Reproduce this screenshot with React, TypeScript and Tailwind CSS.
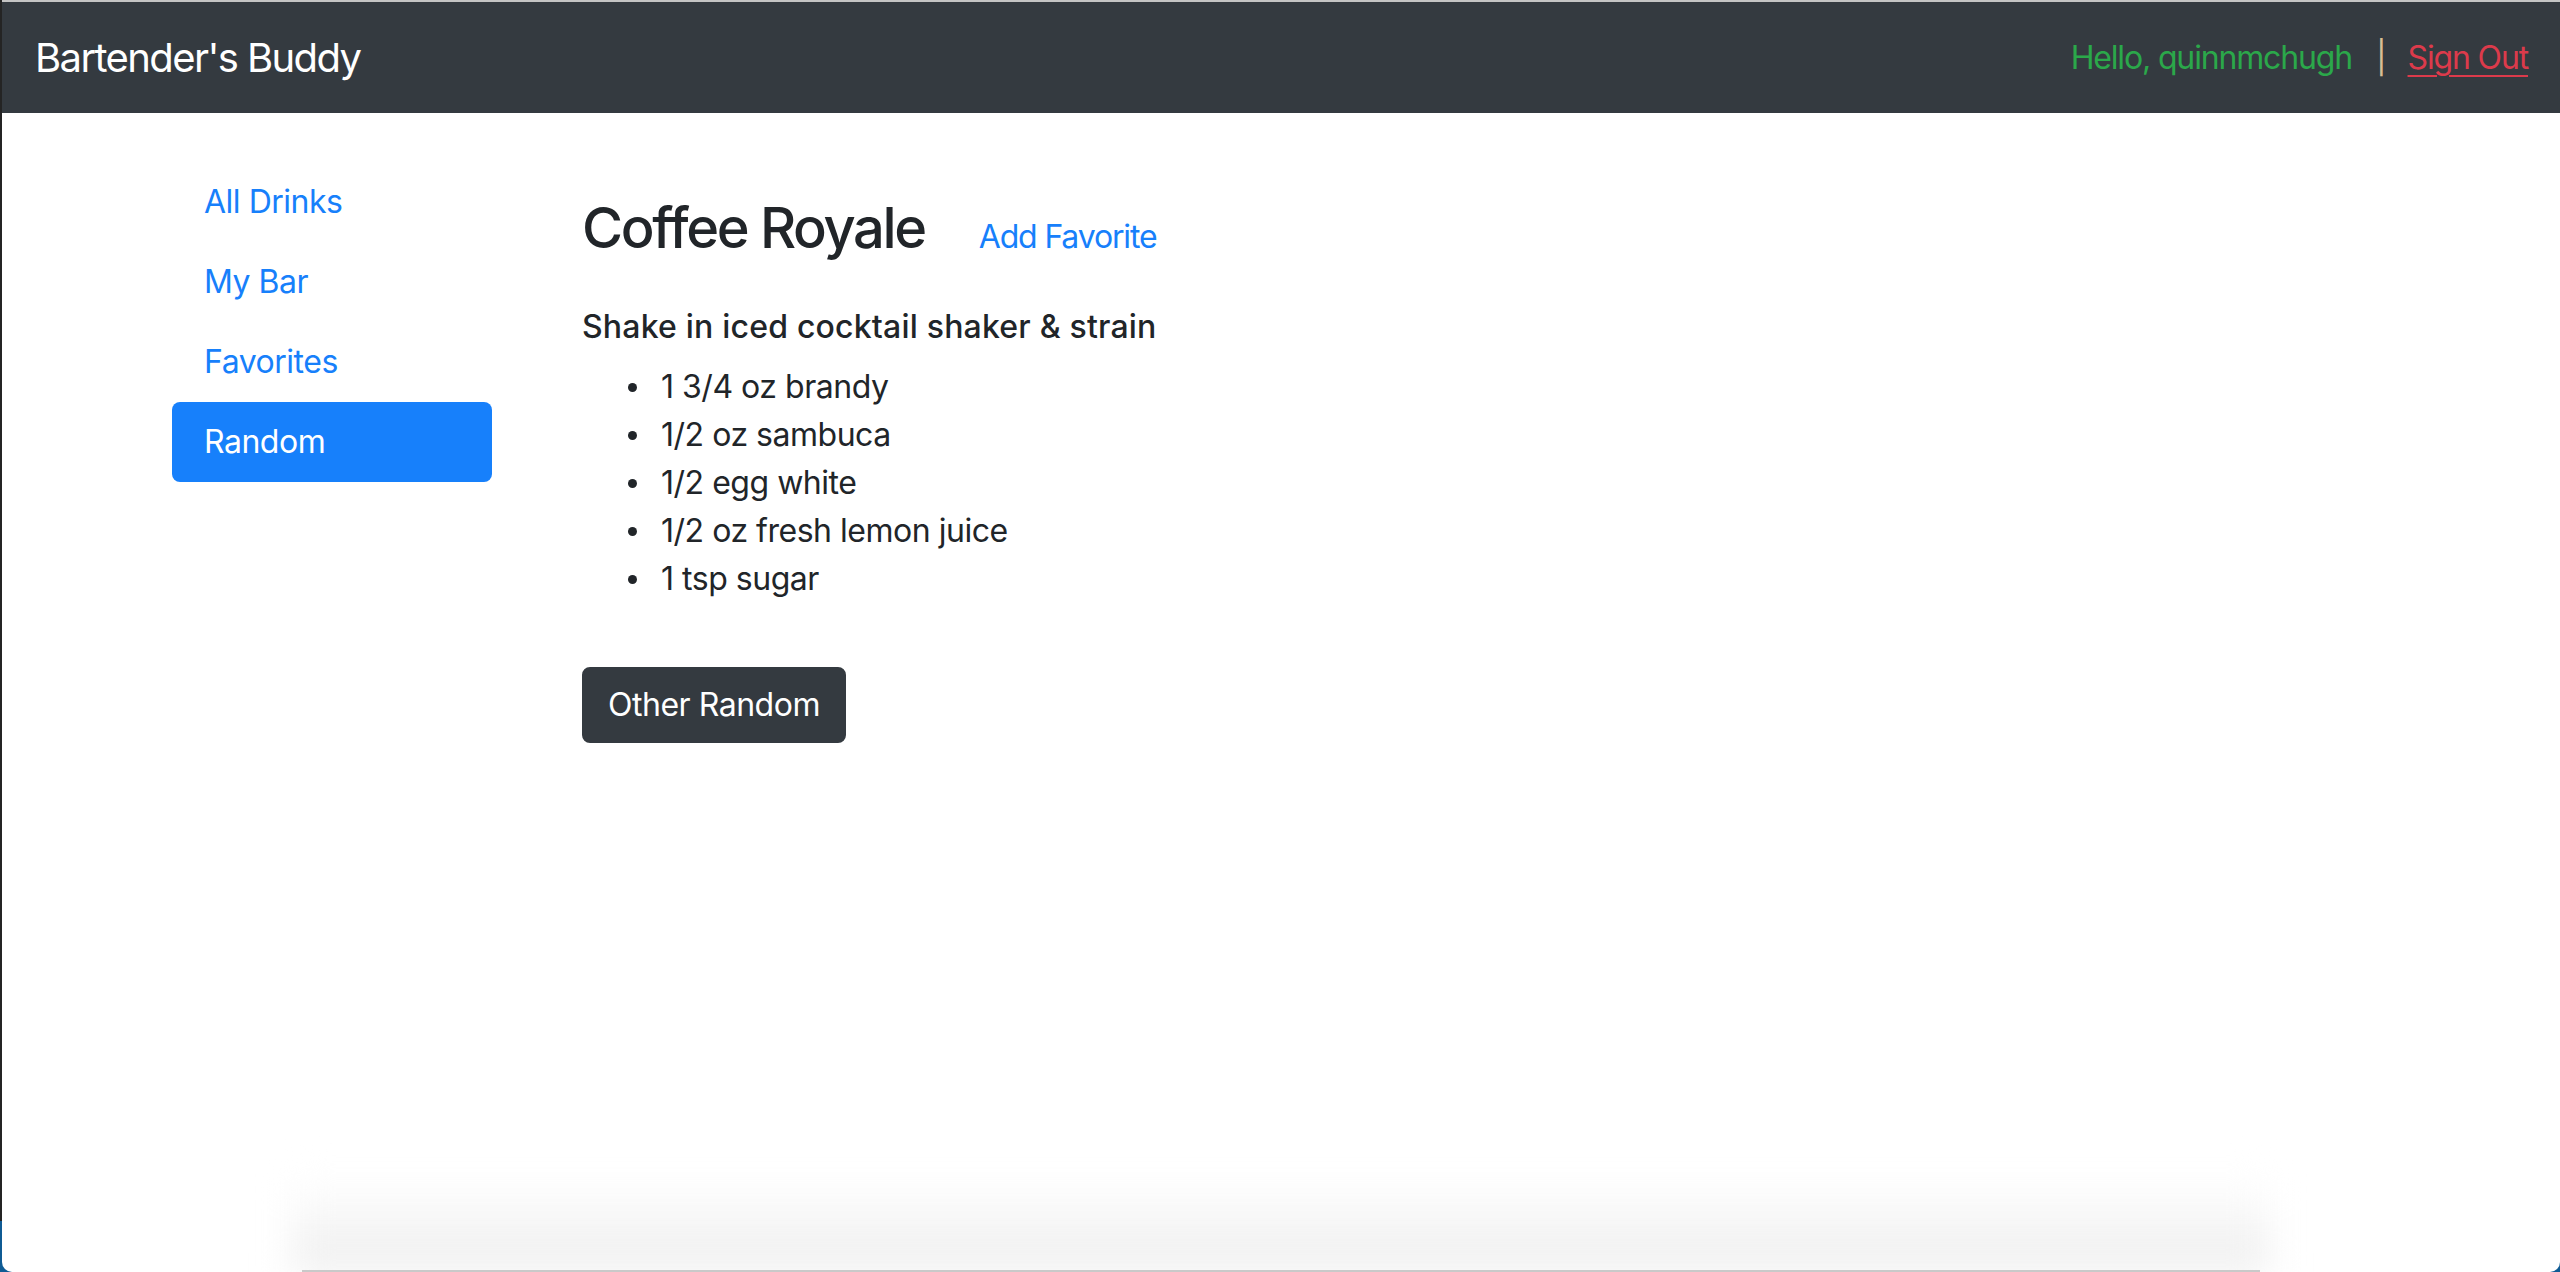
const ingredients = [
  '1 3/4 oz brandy',
  '1/2 oz sambuca',
  '1/2 egg white',
  '1/2 oz fresh lemon juice',
  '1 tsp sugar',
];

const navItems = ['All Drinks', 'My Bar', 'Favorites', 'Random'];

export default function App() {
  return (
    <div
      className="h-[1272px] overflow-hidden bg-gradient-to-b from-[#242424] from-[96%] to-[#0f5b94] to-[96%] pl-[2px] tracking-[-0.03em]"
      style={{ fontFamily: 'Inter, "Noto Sans", sans-serif' }}
    >
      <div className="relative h-full overflow-hidden rounded-b-[10px] border-t-2 border-[#c4c4c4] bg-white text-[#212529]">
        {/* Navbar */}
        <nav className="flex h-[111px] items-center justify-between bg-[#343a40] pl-[33px] pr-[32px]">
          <span className="text-[40px] leading-[60px] tracking-[-0.04em] text-white">Bartender's Buddy</span>
          <div className="flex items-center text-[32px] leading-[48px] tracking-[-0.036em]">
            <span className="text-[#2ba84a]">Hello, quinnmchugh</span>
            <span className="ml-[24px] mr-[22px] text-[#d9bd93]">|</span>
            <a href="#" className="text-[#dc3a4b] underline decoration-2 underline-offset-[6px]">
              Sign Out
            </a>
          </div>
        </nav>

        <div className="flex pl-[170px] pt-[49px]">
          {/* Sidebar */}
          <div className="flex w-[320px] flex-col">
            {navItems.map((item) => (
              <a
                key={item}
                href="#"
                className={
                  item === 'Random'
                    ? 'flex h-[80px] items-center rounded-[8px] bg-[#1780fb] px-[32px] text-[32px] text-white'
                    : 'flex h-[80px] items-center px-[32px] text-[32px] text-[#1780fb]'
                }
              >
                {item}
              </a>
            ))}
          </div>

          {/* Drink */}
          <div className="ml-[90px] flex flex-col pt-[33px]">
            <div className="flex items-baseline">
              <h3 className="text-[56px] leading-[67px] font-medium tracking-[-0.042em]">Coffee Royale</h3>
              <a href="#" className="ml-[54px] text-[32px] tracking-[-0.036em] text-[#1780fb]">
                Add Favorite
              </a>
            </div>
            <h6 className="mt-[41px] text-[32px] leading-[48px] font-medium tracking-[0.2px]">
              Shake in iced cocktail shaker &amp; strain
            </h6>
            <ul className="mt-[12px] flex flex-col">
              {ingredients.map((ing) => (
                <li key={ing} className="flex h-[48px] items-center text-[32px]">
                  <span className="ml-[46px] h-[9px] w-[9px] rounded-full bg-[#212529]" />
                  <span className="ml-[24px]">{ing}</span>
                </li>
              ))}
            </ul>
            <div className="mt-[64px]">
              <button className="h-[76px] rounded-[8px] border-2 border-[#343a40] bg-[#343a40] px-[24px] text-[32px] leading-[48px] text-white">
                Other Random
              </button>
            </div>
          </div>
        </div>

        {/* Bottom shadow */}
        <div className="absolute bottom-0 left-[290px] right-[290px] h-[92px] bg-gradient-to-b from-white to-[#ededed] blur-[18px]" />
        <div className="absolute bottom-0 left-[300px] right-[300px] h-[2px] bg-[#c9c9c9]" />
      </div>
    </div>
  );
}
